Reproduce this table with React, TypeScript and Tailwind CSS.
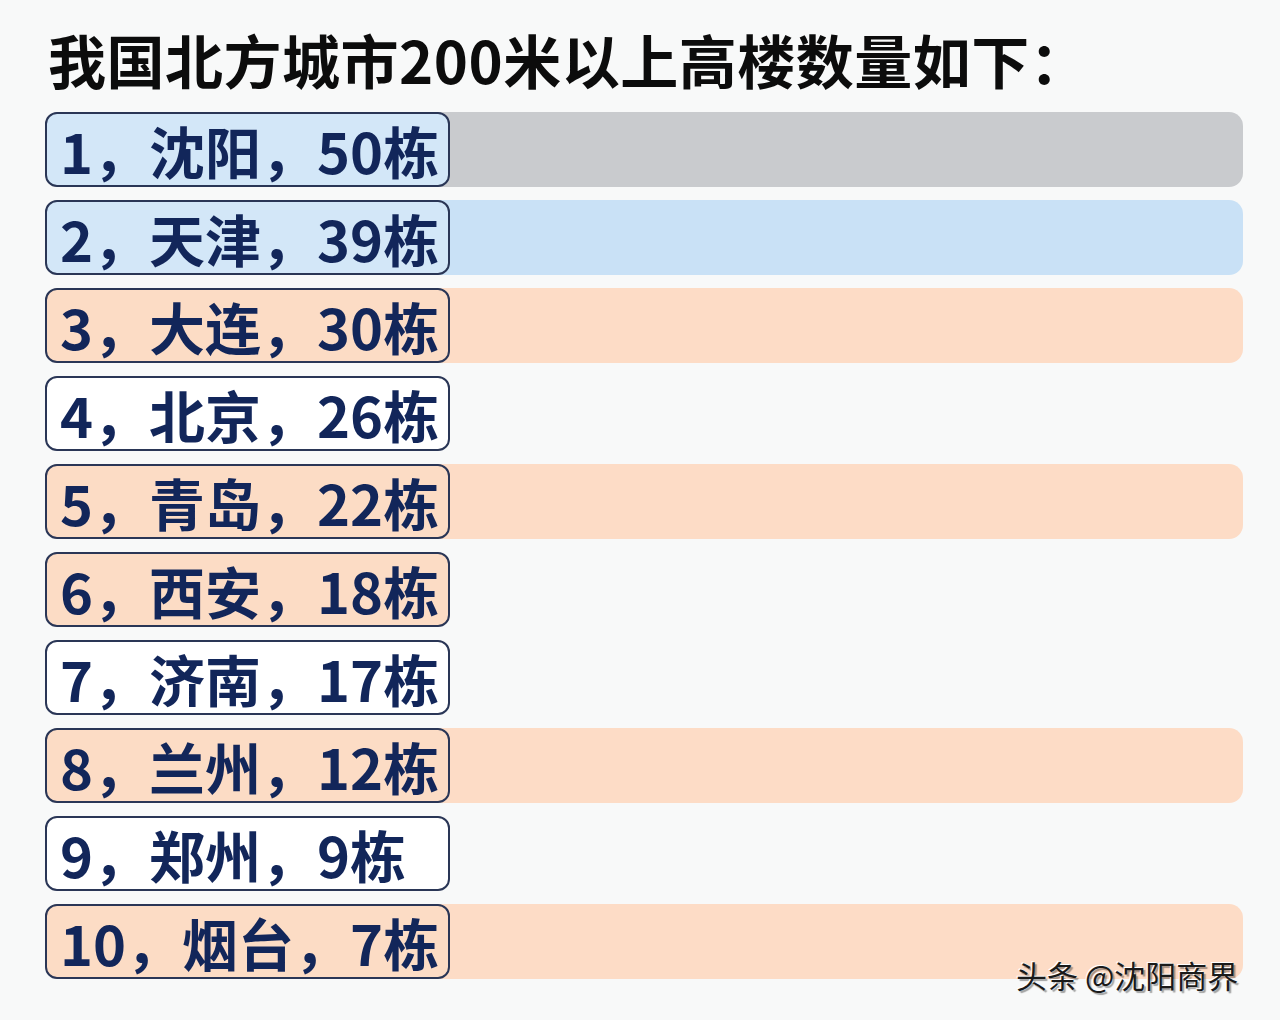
const rows = [
  { n: "1", city: "沈阳", count: "50", label: "bg-[#d3e7f8]", bar: "bg-[#c9cbce]" },
  { n: "2", city: "天津", count: "39", label: "bg-[#d3e7f8]", bar: "bg-[#c9e1f6]" },
  { n: "3", city: "大连", count: "30", label: "bg-[#fcdcc5]", bar: "bg-[#fddcc6]" },
  { n: "4", city: "北京", count: "26", label: "bg-white", bar: "bg-transparent" },
  { n: "5", city: "青岛", count: "22", label: "bg-[#fcdcc5]", bar: "bg-[#fddcc6]" },
  { n: "6", city: "西安", count: "18", label: "bg-[#fcdcc5]", bar: "bg-transparent" },
  { n: "7", city: "济南", count: "17", label: "bg-white", bar: "bg-transparent" },
  { n: "8", city: "兰州", count: "12", label: "bg-[#fcdcc5]", bar: "bg-[#fddcc6]" },
  { n: "9", city: "郑州", count: "9", label: "bg-white", bar: "bg-transparent" },
  { n: "10", city: "烟台", count: "7", label: "bg-[#fcdcc5]", bar: "bg-[#fddcc6]" },
];

export default function App() {
  return (
    <div
      className="relative h-[1020px] w-[1280px] overflow-hidden bg-[#f8f9f9]"
      style={{ fontFamily: '"Noto Sans CJK SC", "Noto Sans", sans-serif' }}
    >
      <div className="pl-[48px] pt-[20px]">
        <h1 className="text-[58px] font-bold leading-[78px] tracking-[0.5px] text-[#0c0c0c]">
          我国北方城市200米以上高楼数量如下：
        </h1>
      </div>
      <div className="mt-[14px] flex flex-col gap-[13px] pl-[45px] pr-[37px]">
        {rows.map((r) => (
          <div key={r.n} className={`flex h-[75px] rounded-[14px] ${r.bar}`}>
            <div
              className={`flex h-[75px] w-[405px] items-center rounded-[12px] border-2 border-[#2a3656] pl-[13px] text-[56px] font-bold leading-none text-[#12265a] ${r.label}`}
            >
              <span>{r.n}</span>
              <span>，</span>
              <span>{r.city}</span>
              <span>，</span>
              <span>{r.count}栋</span>
            </div>
          </div>
        ))}
      </div>
      <div
        className="absolute left-[1016px] top-[954px] text-[31px] leading-[42px] text-[#1a1a1a]"
        style={{ textShadow: "-1px -1px 0 #fff, 2px 2px 1px rgba(0,0,0,0.35)" }}
      >
        头条 @沈阳商界
      </div>
    </div>
  );
}
